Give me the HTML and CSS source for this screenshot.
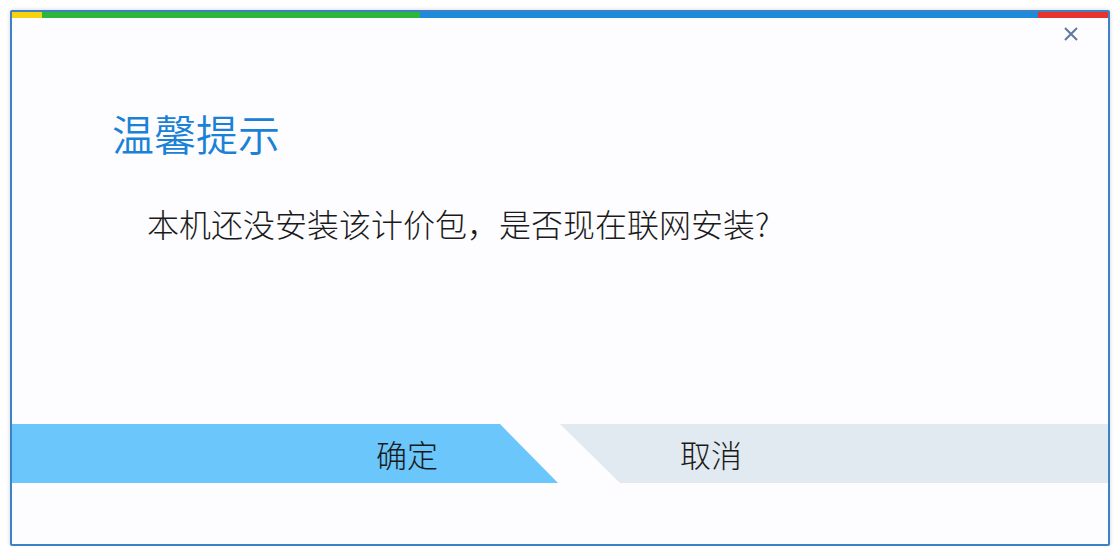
FILE: index.html
```html
<!DOCTYPE html>
<html lang="zh-CN">
<head>
<meta charset="utf-8">
<title>温馨提示</title>
<link rel="stylesheet" href="styles.css">
</head>
<body>
<div class="dialog">
  <div class="colorbar">
    <span class="seg seg-yellow"></span>
    <span class="seg seg-green"></span>
    <span class="seg seg-blue"></span>
    <span class="seg seg-red"></span>
  </div>
  <div class="header">
    <button class="close" aria-label="关闭">
      <svg width="16" height="16" viewBox="0 0 16 16"><path d="M2 2 L14 14 M14 2 L2 14" stroke="#5f789f" stroke-width="2" fill="none"/></svg>
    </button>
  </div>
  <h1 class="title">温馨提示</h1>
  <p class="message">本机还没安装该计价包，是否现在联网安装?</p>
  <div class="actions">
    <button class="btn btn-ok">确定</button>
    <button class="btn btn-cancel">取消</button>
  </div>
</div>
</body>
</html>
```
FILE: styles.css
```css
html, body {
  margin: 0;
  padding: 0;
  background: #ffffff;
}
body {
  font-family: "Noto Sans CJK SC", "Noto Sans", sans-serif;
  padding: 10px 0 0 10px;
}
.dialog {
  box-sizing: border-box;
  width: 1100px;
  height: 536px;
  border: 2px solid #3b83c6;
  border-radius: 2px;
  background: #fdfcfe;
  box-shadow: 0 0 4px rgba(0,0,0,0.18);
  display: flex;
  flex-direction: column;
}
.colorbar {
  display: flex;
  height: 6px;
}
.seg { display: block; height: 100%; }
.seg-yellow { width: 30px; background: #f7d20f; }
.seg-green { width: 378px; background: #2eb63c; }
.seg-blue { width: 618px; background: #1f8ad9; }
.seg-red { width: 70px; background: #e8332d; }
.header {
  display: flex;
  justify-content: flex-end;
  padding: 4px 25px 0 0;
  height: 24px;
}
.close {
  width: 24px;
  height: 24px;
  padding: 0;
  border: 0;
  background: transparent;
  display: flex;
  align-items: center;
  justify-content: center;
}
.title {
  margin: 66px 0 0 100px;
  font-size: 42px;
  line-height: 42px;
  font-weight: 350;
  color: #1a82d6;
}
.message {
  margin: 53px 0 0 135px;
  font-size: 32px;
  line-height: 32px;
  font-weight: 300;
  color: #1a1a1a;
}
.actions {
  margin-top: 185px;
  display: flex;
  gap: 2px;
  height: 59px;
}
.btn {
  border: 0;
  padding: 0;
  margin: 0;
  font-family: inherit;
  font-size: 31px;
  font-weight: 300;
  color: #1a1a1a;
  text-align: left;
  height: 59px;
  line-height: 59px;
}
.btn-ok {
  width: 546px;
  padding-left: 364px;
  background: #6ac6fb;
  clip-path: polygon(0 0, 488px 0, 100% 100%, 0 100%);
}
.btn-cancel {
  width: 548px;
  padding-left: 120px;
  background: #e1e9f1;
  clip-path: polygon(0 0, 100% 0, 100% 100%, 60px 100%);
}
```
